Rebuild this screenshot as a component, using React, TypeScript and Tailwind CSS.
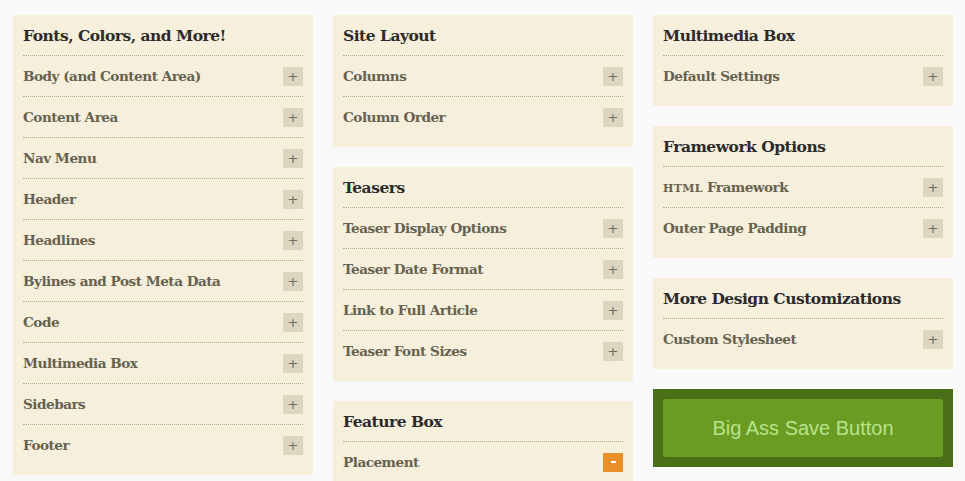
import React from "react";

type Row = { label: React.ReactNode; open?: boolean };
type Box = { title: string; rows: Row[] };

const serif = { fontFamily: '"DejaVu Serif", Georgia, serif' };

function Panel({ title, rows }: Box) {
  return (
    <div className="bg-[#f5efdc] px-[10px] pb-[10px]">
      <div className="h-[40px] pt-[2px] flex items-center text-[15.5px] font-bold text-[#2b2b2b] leading-none tracking-[-0.5px]" style={serif}>
        {title}
      </div>
      {rows.map((r, i) => (
        <div key={i} className="h-[41px] border-t border-dotted border-[#b3a98e] flex items-center justify-between">
          <span className="pt-[2px] text-[13.6px] font-bold text-[#66624f] leading-none tracking-[-0.5px]" style={serif}>{r.label}</span>
          {r.open ? (
            <span className="w-[20px] h-[19px] bg-[#ea902b] flex items-center justify-center">
              <span className="w-[5px] h-[2px] bg-white" />
            </span>
          ) : (
            <span className="w-[20px] h-[19px] bg-[#dbd6bf] flex items-center justify-center text-[#6e6d63] text-[13px] leading-none" style={{ fontFamily: '"DejaVu Sans", sans-serif' }}>
              +
            </span>
          )}
        </div>
      ))}
    </div>
  );
}

export default function App() {
  const col1: Box[] = [
    {
      title: "Fonts, Colors, and More!",
      rows: [
        "Body (and Content Area)",
        "Content Area",
        "Nav Menu",
        "Header",
        "Headlines",
        "Bylines and Post Meta Data",
        "Code",
        "Multimedia Box",
        "Sidebars",
        "Footer",
      ].map((l) => ({ label: l })),
    },
  ];
  const col2: Box[] = [
    { title: "Site Layout", rows: [{ label: "Columns" }, { label: "Column Order" }] },
    {
      title: "Teasers",
      rows: [
        { label: "Teaser Display Options" },
        { label: "Teaser Date Format" },
        { label: "Link to Full Article" },
        { label: "Teaser Font Sizes" },
      ],
    },
    { title: "Feature Box", rows: [{ label: "Placement", open: true }] },
  ];
  const col3: Box[] = [
    { title: "Multimedia Box", rows: [{ label: "Default Settings" }] },
    {
      title: "Framework Options",
      rows: [
        {
          label: (
            <>
              <span className="text-[11px] tracking-[0.3px]">HTML</span> Framework
            </>
          ),
        },
        { label: "Outer Page Padding" },
      ],
    },
    { title: "More Design Customizations", rows: [{ label: "Custom Stylesheet" }] },
  ];
  return (
    <div className="w-[965px] h-[481px] overflow-hidden bg-[#f9f9f9] pl-[13px] pt-[15px] flex gap-[20px] items-start">
      <div className="w-[300px] flex flex-col gap-[20px]">
        {col1.map((b, i) => (
          <Panel key={i} {...b} />
        ))}
      </div>
      <div className="w-[300px] flex flex-col gap-[20px]">
        {col2.map((b, i) => (
          <Panel key={i} {...b} />
        ))}
      </div>
      <div className="w-[300px] flex flex-col gap-[20px]">
        {col3.map((b, i) => (
          <Panel key={i} {...b} />
        ))}
        <div className="bg-[#4a6f18] p-[10px]">
          <button
            className="w-full h-[58px] rounded-[3px] bg-[#6a9c23] text-[#b9e38c] text-[20px] flex items-center justify-center"
            style={{ fontFamily: '"Liberation Sans", Arial, sans-serif' }}
          >
            Big Ass Save Button
          </button>
        </div>
      </div>
    </div>
  );
}
